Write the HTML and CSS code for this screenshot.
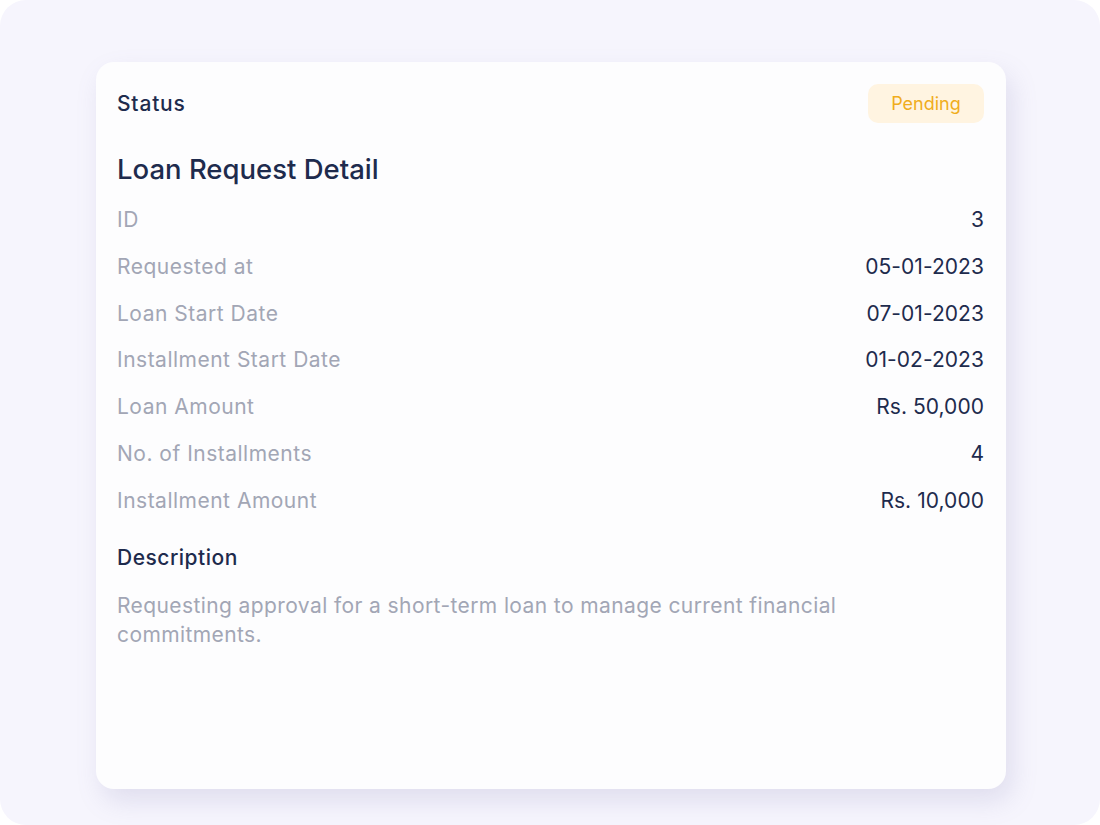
FILE: index.html
```html
<!DOCTYPE html>
<html lang="en">
<head>
    <meta charset="UTF-8">
    <meta name="viewport" content="width=device-width, initial-scale=1.0">
    <title>Loan Request Detail</title>
    <link rel="stylesheet" href="styles.css">
</head>
<body>

    <div class="frame">
        <div class="card">
            <div class="card-head">
                <span class="head-label">Status</span>
                <span class="badge pending">Pending</span>
            </div>

            <h2 class="title">Loan Request Detail</h2>

            <div class="details">
                <div class="row"><span class="label">ID</span><span class="value">3</span></div>
                <div class="row"><span class="label">Requested at</span><span class="value">05-01-2023</span></div>
                <div class="row"><span class="label">Loan Start Date</span><span class="value">07-01-2023</span></div>
                <div class="row"><span class="label">Installment Start Date</span><span class="value">01-02-2023</span></div>
                <div class="row"><span class="label">Loan Amount</span><span class="value">Rs. 50,000</span></div>
                <div class="row"><span class="label">No. of Installments</span><span class="value">4</span></div>
                <div class="row"><span class="label">Installment Amount</span><span class="value">Rs. 10,000</span></div>
            </div>

            <h3 class="section-title">Description</h3>
            <p class="description">Requesting approval for a short-term loan to manage current financial commitments.</p>
        </div>
    </div>

</body>
</html>
```

FILE: styles.css
```css
html, body {
    margin: 0;
    height: 100%;
}
body {
    font-family: Inter, "Noto Sans", sans-serif;
    background-color: #ffffff;
    color: #1e2b4d;
}
.frame {
    height: 825px;
    box-sizing: border-box;
    background-color: #f6f5fd;
    border-radius: 26px;
    padding: 62px 94px 36px 96px;
}
.card {
    height: 727px;
    box-sizing: border-box;
    background-color: #fdfdfe;
    border-radius: 18px;
    box-shadow: 6px 12px 26px rgba(120, 115, 170, 0.18);
    padding: 22px 22px 22px 21px;
}
.card-head {
    display: flex;
    justify-content: space-between;
    align-items: center;
}
.head-label {
    font-size: 21px;
    font-weight: 500;
    letter-spacing: 0.8px;
}
.badge {
    display: inline-flex;
    align-items: center;
    justify-content: center;
    width: 116px;
    height: 39px;
    border-radius: 10px;
    font-size: 18px;
}
.badge.pending {
    background-color: #fff4e1;
    color: #f0ad1c;
}
.title {
    margin: 28px 0 10px;
    font-size: 27.5px;
    line-height: 36px;
    font-weight: 500;
}
.row {
    display: flex;
    justify-content: space-between;
    font-size: 21px;
    line-height: 46.8px;
}
.label {
    color: #a2a6b5;
    letter-spacing: 0.5px;
}
.value {
    color: #1e2b4d;
    letter-spacing: 0.05px;
}
.section-title {
    margin: 18px 0 18px;
    font-size: 21px;
    line-height: 30px;
    font-weight: 500;
    letter-spacing: 0.5px;
}
.description {
    margin: 0;
    max-width: 740px;
    font-size: 21px;
    line-height: 29px;
    letter-spacing: 0.4px;
    color: #a2a6b5;
}
```
